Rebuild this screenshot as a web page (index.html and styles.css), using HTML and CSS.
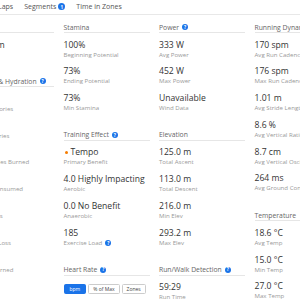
FILE: index.html
```html
<!DOCTYPE html>
<html lang="en">
<head>
    <meta charset="UTF-8">
    <meta name="viewport" content="width=device-width, initial-scale=1.0">
    <title>Activity Stats</title>
    <link rel="stylesheet" href="styles.css">
</head>
<body>
    <!-- Activity tabs -->
    <div class="tabs">
        <span class="tab">Laps</span>
        <span class="tab">Segments <span class="badge">1</span></span>
        <span class="tab">Time in Zones</span>
    </div>

    <!-- Stats grid -->
    <div class="stats">
        <div class="column">
            <div class="group">
                <div class="group-title">Distance</div>
                <div class="stat"><div class="value">10.02 km</div><div class="label">Distance</div></div>
            </div>
            <div class="group">
                <div class="group-title">Nutrition &amp; Hydration <span class="help">?</span></div>
                <div class="stat"><div class="value">1,657</div><div class="label">Resting Calories</div></div>
                <div class="stat"><div class="value">712</div><div class="label">Active Calories</div></div>
                <div class="stat"><div class="value">2,369</div><div class="label">Total Calories Burned</div></div>
                <div class="stat"><div class="value">--</div><div class="label">Calories Consumed</div></div>
                <div class="stat"><div class="value">--</div><div class="label">Net Calories</div></div>
                <div class="stat"><div class="value">1.2 l</div><div class="label">Est. Sweat Loss</div></div>
                <div class="stat"><div class="value">--</div><div class="label">Calories Burned</div></div>
            </div>
        </div>

        <div class="column">
            <div class="group">
                <div class="group-title">Stamina</div>
                <div class="stat"><div class="value">100%</div><div class="label">Beginning Potential</div></div>
                <div class="stat"><div class="value">73%</div><div class="label">Ending Potential</div></div>
                <div class="stat"><div class="value">73%</div><div class="label">Min Stamina</div></div>
            </div>
            <div class="group">
                <div class="group-title">Training Effect <span class="help">?</span></div>
                <div class="stat"><div class="value"><span class="dot"></span>Tempo</div><div class="label">Primary Benefit</div></div>
                <div class="stat"><div class="value">4.0 Highly Impacting</div><div class="label">Aerobic</div></div>
                <div class="stat"><div class="value">0.0 No Benefit</div><div class="label">Anaerobic</div></div>
                <div class="stat"><div class="value">185</div><div class="label">Exercise Load <span class="help">?</span></div></div>
            </div>
            <div class="group">
                <div class="group-title">Heart Rate <span class="help">?</span></div>
                <div class="toggle">
                    <span class="toggle-btn active">bpm</span>
                    <span class="toggle-btn">% of Max</span>
                    <span class="toggle-btn">Zones</span>
                </div>
            </div>
        </div>

        <div class="column">
            <div class="group">
                <div class="group-title">Power <span class="help">?</span></div>
                <div class="stat"><div class="value">333 W</div><div class="label">Avg Power</div></div>
                <div class="stat"><div class="value">452 W</div><div class="label">Max Power</div></div>
                <div class="stat"><div class="value">Unavailable</div><div class="label">Wind Data</div></div>
            </div>
            <div class="group">
                <div class="group-title">Elevation</div>
                <div class="stat"><div class="value">125.0 m</div><div class="label">Total Ascent</div></div>
                <div class="stat"><div class="value">113.0 m</div><div class="label">Total Descent</div></div>
                <div class="stat"><div class="value">216.0 m</div><div class="label">Min Elev</div></div>
                <div class="stat"><div class="value">293.2 m</div><div class="label">Max Elev</div></div>
            </div>
            <div class="group">
                <div class="group-title">Run/Walk Detection <span class="help">?</span></div>
                <div class="stat"><div class="value">59:29</div><div class="label">Run Time</div></div>
            </div>
        </div>

        <div class="column">
            <div class="group">
                <div class="group-title">Running Dynamics</div>
                <div class="stat"><div class="value">170 spm</div><div class="label">Avg Run Cadence</div></div>
                <div class="stat"><div class="value">176 spm</div><div class="label">Max Run Cadence</div></div>
                <div class="stat"><div class="value">1.01 m</div><div class="label">Avg Stride Length</div></div>
                <div class="stat"><div class="value">8.6 %</div><div class="label">Avg Vertical Ratio</div></div>
                <div class="stat"><div class="value">8.7 cm</div><div class="label">Avg Vertical Oscillation</div></div>
                <div class="stat"><div class="value">264 ms</div><div class="label">Avg Ground Contact Time</div></div>
            </div>
            <div class="group">
                <div class="group-title">Temperature</div>
                <div class="stat"><div class="value">18.6 °C</div><div class="label">Avg Temp</div></div>
                <div class="stat"><div class="value">15.0 °C</div><div class="label">Min Temp</div></div>
                <div class="stat"><div class="value">27.0 °C</div><div class="label">Max Temp</div></div>
            </div>
        </div>
    </div>
</body>
</html>
```

FILE: styles.css
```css
* {
    margin: 0;
    padding: 0;
    box-sizing: border-box;
    font-family: "Open Sans", sans-serif;
}

body {
    width: 300px;
    height: 300px;
    overflow: hidden;
    background-color: #fff;
    color: #333;
}

.tabs {
    display: flex;
    align-items: center;
    gap: 11px;
    height: 15px;
    margin-left: -2px;
    padding-bottom: 1px;
    border-bottom: 1px solid #e8e8e8;
    font-size: 7px;
    color: #555;
}

.tab {
    display: flex;
    align-items: center;
    gap: 2px;
    white-space: nowrap;
}

.badge {
    display: inline-flex;
    justify-content: center;
    align-items: center;
    width: 7px;
    height: 7px;
    border-radius: 50%;
    background-color: #1a73e8;
    color: #fff;
    font-size: 4.5px;
    font-weight: bold;
}

.stats {
    display: grid;
    grid-template-columns: repeat(4, 86px);
    column-gap: 9.5px;
    margin-left: -32px;
    padding-top: 8px;
}

.group {
    margin-bottom: 11px;
}

.group-title {
    display: flex;
    align-items: center;
    gap: 3px;
    height: 10px;
    margin-bottom: 6.5px;
    padding-bottom: 1px;
    border-bottom: 1px solid #e6e6e6;
    font-size: 6.8px;
    line-height: 9px;
    color: #666;
    white-space: nowrap;
}

.help {
    display: inline-flex;
    justify-content: center;
    align-items: center;
    width: 6px;
    height: 6px;
    border-radius: 50%;
    background-color: #1a73e8;
    color: #fff;
    font-size: 4.5px;
    font-weight: bold;
    line-height: 1;
}

.stat {
    height: 26.8px;
    white-space: nowrap;
}

.value {
    display: flex;
    align-items: center;
    font-size: 8.6px;
    line-height: 11px;
    color: #333;
}

.dot {
    width: 3px;
    height: 3px;
    margin: 0 3px 0 1px;
    border-radius: 50%;
    background-color: #f57c00;
}

.label {
    display: flex;
    align-items: center;
    gap: 3px;
    font-size: 6.1px;
    line-height: 8px;
    color: #999;
}

.toggle {
    display: flex;
    gap: 2px;
    padding-top: 2px;
}

.toggle-btn {
    padding: 0 4px;
    height: 10px;
    border: 1px solid #ccc;
    border-radius: 1.5px;
    font-size: 5px;
    line-height: 8px;
    color: #444;
}

.toggle-btn.active {
    padding: 0 5px;
    border-color: #1a73e8;
    background-color: #1a73e8;
    color: #fff;
}
```
